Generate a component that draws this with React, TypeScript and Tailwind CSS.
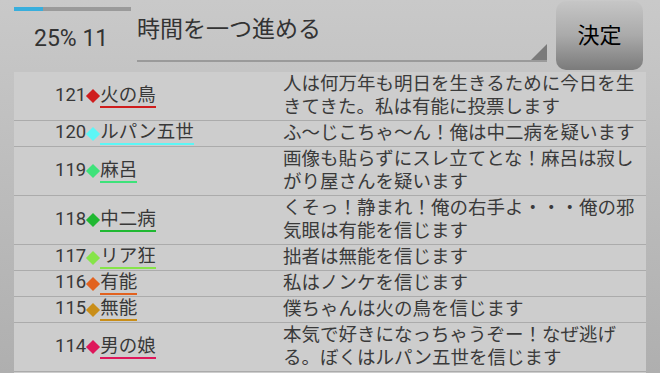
const rows = [
  { no: 121, name: "火の鳥", color: "#cf1d1d", text: "人は何万年も明日を生きるために今日を生きてきた。私は有能に投票します" },
  { no: 120, name: "ルパン五世", color: "#5cf6f6", text: "ふ〜じこちゃ〜ん！俺は中二病を疑います" },
  { no: 119, name: "麻呂", color: "#3ee27a", text: "画像も貼らずにスレ立てとな！麻呂は寂しがり屋さんを疑います" },
  { no: 118, name: "中二病", color: "#20b832", text: "くそっ！静まれ！俺の右手よ・・・俺の邪気眼は有能を信じます" },
  { no: 117, name: "リア狂", color: "#86e449", text: "拙者は無能を信じます" },
  { no: 116, name: "有能", color: "#e2621f", text: "私はノンケを信じます" },
  { no: 115, name: "無能", color: "#c98e19", text: "僕ちゃんは火の鳥を信じます" },
  { no: 114, name: "男の娘", color: "#de175a", text: "本気で好きになっちゃうぞー！なぜ逃げる。ぼくはルパン五世を信じます" },
];

const font = { fontFamily: 'Roboto, "Noto Sans CJK JP", sans-serif' };

export default function App() {
  return (
    <div
      className="h-[373px] w-[660px] overflow-hidden bg-linear-to-b from-[#c9c9c9] to-[#afafaf] text-[#383838]"
      style={font}
    >
      {/* header */}
      <div className="flex h-[72px]">
        <div className="w-[137px] shrink-0 pl-[14px] pt-[7px]">
          <div className="flex h-[4px] w-[117px] bg-[#9a9a9a]">
            <div className="w-[29px] bg-[#38aedc]" />
          </div>
          <div className="mt-[16px] pl-[20px] text-[23px] leading-none text-[#333]">25% 11</div>
        </div>
        <div className="flex h-[62px] w-[410px] shrink-0 border-b-2 border-[#9a9a9a]">
          <div className="flex-1 pt-[18px] text-[23px] leading-none text-[#333]">時間を一つ進める</div>
          <div className="h-0 w-0 self-end border-b-[16px] border-l-[16px] border-b-[#7a7a7a] border-l-transparent" />
        </div>
        <button className="ml-[9px] mt-[1px] flex h-[69px] w-[87px] items-center justify-center rounded-[10px] bg-linear-to-b from-[#c6c6c6] via-[#aaaaaa] to-[#7b7b7b] text-[22px] text-black">
          決定
        </button>
      </div>

      {/* list */}
      <div className="mx-[14px] h-full bg-[#cdcdcd]">
        {rows.map((r) => (
          <div key={r.no} className="grid grid-cols-[269px_1fr] border-b border-[#ababab]">
            <div className="flex items-center pl-[41px] text-[18.5px]">
              <span className="leading-[21px] pb-[2px]">{r.no}</span>
              <span className="mx-[2px] h-[10px] w-[10px] rotate-45" style={{ backgroundColor: r.color }} />
              <span className="border-b-2 leading-[21px]" style={{ borderColor: r.color }}>
                {r.name}
              </span>
            </div>
            <div className="py-px text-[18.5px] leading-[23px] text-[#3a3a3a]">{r.text}</div>
          </div>
        ))}
      </div>
    </div>
  );
}
